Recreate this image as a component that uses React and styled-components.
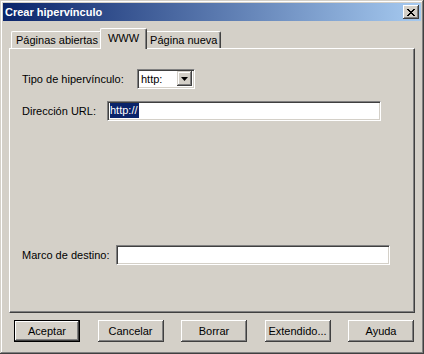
import React from 'react';
import styled, { createGlobalStyle } from 'styled-components';

const GlobalStyle = createGlobalStyle`
html, body {
margin: 0;
padding: 0;
background: #d4d0c8;
}
body {
font-family: "Liberation Sans", Arial, sans-serif;
font-size: 11px;
color: #000;
}
`;

const Window = styled.div`
width: 424px;
height: 354px;
box-sizing: border-box;
padding: 3px;
background: #d4d0c8;
display: flex;
flex-direction: column;
box-shadow: inset -1px -1px #404040, inset 1px 1px #d4d0c8, inset -2px -2px #808080, inset 2px 2px #ffffff;
`;

const TitleBar = styled.div`
height: 18px;
display: flex;
align-items: center;
justify-content: space-between;
padding: 0 2px 0 2px;
background: linear-gradient(to right, #0a246a, #a6caf0);
`;

const Title = styled.span`
color: #fff;
font-weight: bold;
font-size: 11px;
`;

const CloseButton = styled.div`
width: 16px;
height: 14px;
box-sizing: border-box;
background: #d4d0c8;
display: flex;
align-items: center;
justify-content: center;
box-shadow: inset -1px -1px #404040, inset 1px 1px #ffffff, inset -2px -2px #808080;
`;

const Body = styled.div`
flex: 1;
display: flex;
flex-direction: column;
padding: 7px 6px 0 6px;
`;

const TabRow = styled.div`
display: flex;
align-items: flex-end;
height: 20px;
padding-left: 2px;
`;

const Tab = styled.div`
position: relative;
box-sizing: border-box;
height: ${p => (p.$active ? '21px' : '17px')};
margin: ${p => (p.$active ? '0 -2px -1px -2px' : '0')};
padding: ${p => (p.$active ? '3px 7px 0 7px' : '2px 3px 0 4px')};
z-index: ${p => (p.$active ? 2 : 1)};
background: #d4d0c8;
border-top: 1px solid #fff;
border-left: 1px solid #fff;
border-right: 1px solid #404040;
border-top-left-radius: 2px;
border-top-right-radius: 2px;
box-shadow: inset -1px 0 #808080;
white-space: nowrap;
`;

const Panel = styled.div`
height: 265px;
box-sizing: border-box;
display: flex;
flex-direction: column;
padding: 20px 12px 48px 12px;
border-top: 1px solid #fff;
border-left: 1px solid #fff;
border-right: 1px solid #404040;
border-bottom: 1px solid #404040;
box-shadow: inset -1px -1px #808080;
`;

const Row = styled.div`
display: flex;
align-items: center;
height: 19px;
margin-bottom: ${p => p.$gap || 0}px;
`;

const Spacer = styled.div`
flex: 1;
`;

const Label = styled.span`
width: ${p => p.$width}px;
white-space: nowrap;
`;

const Sunken = styled.div`
box-sizing: border-box;
height: ${p => p.$height || 20}px;
width: ${p => p.$width}px;
background: #fff;
border-top: 1px solid #808080;
border-left: 1px solid #808080;
border-bottom: 1px solid #fff;
border-right: 1px solid #fff;
box-shadow: inset 1px 1px #404040, inset -1px -1px #d4d0c8;
display: flex;
align-items: center;
padding: 0 2px;
`;

const SelectText = styled.span`
flex: 1;
padding-left: 1px;
`;

const DropButton = styled.div`
width: 15px;
height: 15px;
box-sizing: border-box;
background: #d4d0c8;
display: flex;
align-items: center;
justify-content: center;
box-shadow: inset -1px -1px #404040, inset 1px 1px #d4d0c8, inset -2px -2px #808080, inset 2px 2px #fff;
`;

const Highlight = styled.span`
background: #0a246a;
color: #fff;
padding: 1px 1px 2px 0;
`;

const ButtonRow = styled.div`
display: flex;
justify-content: space-between;
padding: 0 1px 0 5px;
margin-top: 7px;
`;

const Button = styled.div`
width: 66px;
height: 22px;
box-sizing: border-box;
display: flex;
align-items: center;
justify-content: center;
background: #d4d0c8;
box-shadow: ${p => (p.$default
    ? 'inset 0 0 0 1px #000, inset -2px -2px #404040, inset 2px 2px #fff, inset -3px -3px #808080'
    : 'inset -1px -1px #404040, inset 1px 1px #fff, inset -2px -2px #808080')};
`;

const App = () => {
    return (
        <>
            <GlobalStyle />
            <Window>
                <TitleBar>
                    <Title>Crear hipervínculo</Title>
                    <CloseButton>
                        <svg width="8" height="7" viewBox="0 0 8 7">
                            <path d="M0 0h2v1h1v1h2V1h1V0h2v1H7v1H6v1H5v1h1v1h1v1h1v1H6V6H5V5H3v1H2v1H0V6h1V5h1V4h1V3H2V2H1V1H0z" fill="#000" />
                        </svg>
                    </CloseButton>
                </TitleBar>
                <Body>
                    <TabRow>
                        <Tab>Páginas abiertas</Tab>
                        <Tab $active>WWW</Tab>
                        <Tab>Página nueva</Tab>
                    </TabRow>
                    <Panel>
                        <Row $gap={13}>
                            <Label $width={115}>Tipo de hipervínculo:</Label>
                            <Sunken $width={58}>
                                <SelectText>http:</SelectText>
                                <DropButton>
                                    <svg width="7" height="4" viewBox="0 0 7 4">
                                        <path d="M0 0h7L3.5 4z" fill="#000" />
                                    </svg>
                                </DropButton>
                            </Sunken>
                        </Row>
                        <Row>
                            <Label $width={85}>Dirección URL:</Label>
                            <Sunken $width={274}>
                                <Highlight>http://</Highlight>
                            </Sunken>
                        </Row>
                        <Spacer />
                        <Row>
                            <Label $width={94}>Marco de destino:</Label>
                            <Sunken $width={274} />
                        </Row>
                    </Panel>
                    <ButtonRow>
                        <Button $default>Aceptar</Button>
                        <Button>Cancelar</Button>
                        <Button>Borrar</Button>
                        <Button>Extendido...</Button>
                        <Button>Ayuda</Button>
                    </ButtonRow>
                </Body>
            </Window>
        </>
    );
};

export default App;
